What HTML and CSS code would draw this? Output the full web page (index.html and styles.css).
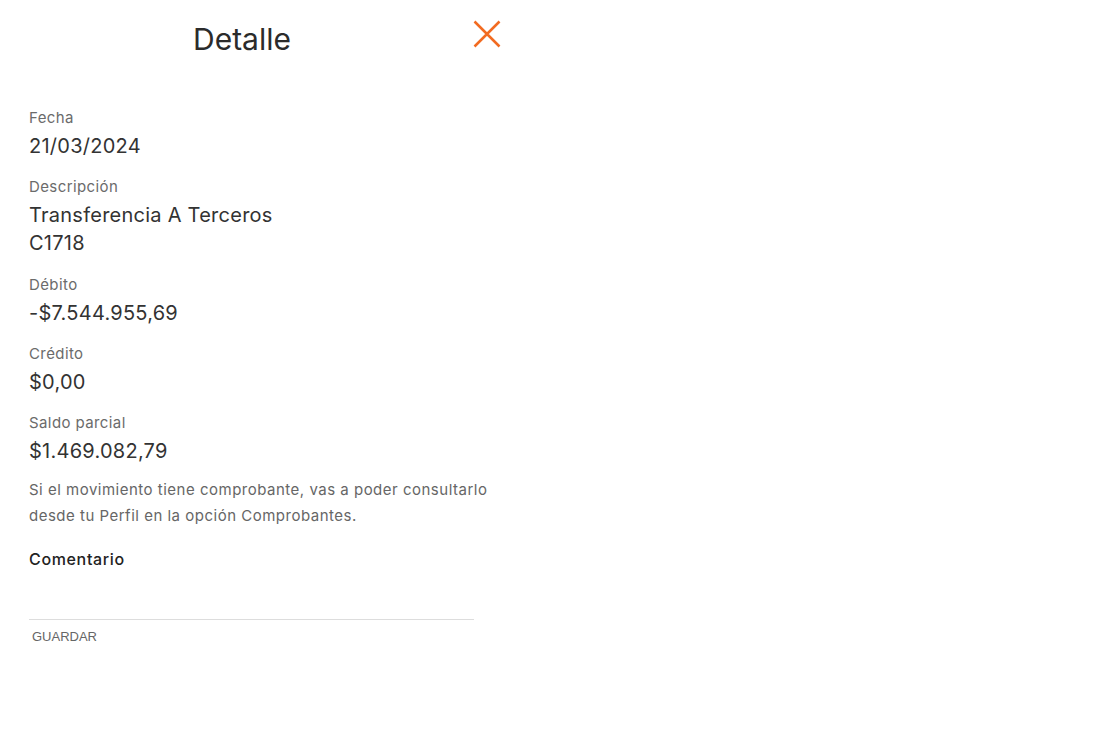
FILE: index.html
```html
<!DOCTYPE html>
<html lang="es">
<head>
<meta charset="utf-8">
<title>Detalle</title>
<link rel="stylesheet" href="styles.css">
</head>
<body>
<div class="panel">
  <header class="header">
    <h1 class="title">Detalle</h1>
    <button class="close" aria-label="Cerrar">
      <svg width="28" height="28" viewBox="0 0 28 28"><path d="M1.5 1.5 L26.5 26.5 M26.5 1.5 L1.5 26.5" stroke="#f26b21" stroke-width="2.5" fill="none"/></svg>
    </button>
  </header>
  <div class="content">
    <div class="field">
      <div class="label">Fecha</div>
      <div class="value">21/03/2024</div>
    </div>
    <div class="field">
      <div class="label">Descripción</div>
      <div class="value multi">Transferencia A Terceros<br>C1718</div>
    </div>
    <div class="field">
      <div class="label">Débito</div>
      <div class="value">-$7.544.955,69</div>
    </div>
    <div class="field">
      <div class="label">Crédito</div>
      <div class="value">$0,00</div>
    </div>
    <div class="field">
      <div class="label">Saldo parcial</div>
      <div class="value">$1.469.082,79</div>
    </div>
    <p class="note">Si el movimiento tiene comprobante, vas a poder consultarlo desde tu Perfil en la opción Comprobantes.</p>
    <div class="comment">
      <div class="comment-title">Comentario</div>
      <div class="comment-input"></div>
      <button class="save">GUARDAR</button>
    </div>
  </div>
</div>
</body>
</html>
```

FILE: styles.css
```css
html, body {
  margin: 0;
  padding: 0;
  background: #ffffff;
}
body {
  font-family: Inter, "Noto Sans", sans-serif;
  color: #333333;
}
.panel {
  width: 510px;
}
.header {
  display: flex;
  align-items: flex-start;
  height: 104px;
}
.title {
  width: 484px;
  margin: 0;
  padding-top: 21px;
  text-align: center;
  font-size: 30px;
  line-height: 36px;
  font-weight: 400;
  color: #2b2b2b;
}
.close {
  margin: 20px 0 0 -11px;
  padding: 0;
  border: 0;
  background: none;
  width: 28px;
  height: 28px;
  cursor: pointer;
}
.close svg {
  display: block;
}
.content {
  padding-left: 29px;
  display: flex;
  flex-direction: column;
  gap: 13px;
}
.label {
  font-size: 15px;
  line-height: 28px;
  color: #6b6b6b;
  letter-spacing: 0.4px;
}
.value {
  font-size: 20px;
  line-height: 28px;
  color: #333333;
  letter-spacing: 0.25px;
}
.value.multi {
  padding-bottom: 1px;
}
.note {
  margin: -1px 0 0;
  width: 470px;
  font-size: 15px;
  line-height: 26px;
  color: #666666;
  letter-spacing: 0.5px;
}
.comment {
  margin-top: 5px;
  width: 445px;
}
.comment-title {
  font-size: 16px;
  line-height: 24px;
  font-weight: 500;
  color: #222222;
  letter-spacing: 0.65px;
}
.comment-input {
  height: 48px;
  border-bottom: 1px solid #dddddd;
}
.save {
  display: block;
  margin: 7px 0 0 3px;
  padding: 0;
  border: 0;
  background: none;
  font-family: "Liberation Sans", Arial, sans-serif;
  font-size: 13px;
  line-height: 20px;
  color: #666666;
}
```
